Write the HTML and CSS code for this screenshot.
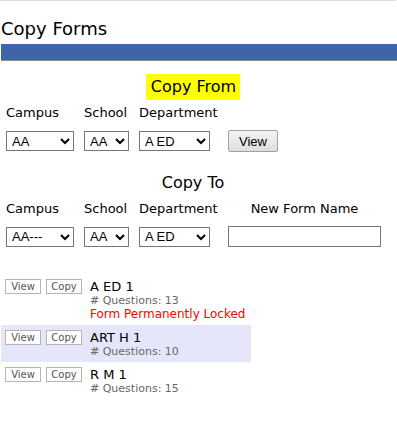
FILE: index.html
```html
<!DOCTYPE html>
<html lang="en">
<head>
    <meta charset="UTF-8">
    <meta name="viewport" content="width=device-width, initial-scale=1.0">
    <title>Copy Forms</title>
    <link rel="stylesheet" href="styles.css">
</head>
<body>
    <div class="topline"></div>
    <h1 class="title">Copy Forms</h1>
    <div class="bar"></div>

    <div class="section from">
        <h3 class="heading"><span class="mark">Copy From</span></h3>
        <div class="fields">
            <label>Campus</label>
            <label>School</label>
            <label>Department</label>
            <span></span>
            <select class="sel campus"><option>AA</option></select>
            <select class="sel school"><option>AA</option></select>
            <select class="sel dept"><option>A ED</option></select>
            <button type="button" class="btn">View</button>
        </div>
    </div>

    <div class="section to">
        <h3 class="heading"><span class="plain">Copy To</span></h3>
        <div class="fields">
            <label>Campus</label>
            <label>School</label>
            <label>Department</label>
            <label class="center">New Form Name</label>
            <select class="sel campus"><option>AA---</option></select>
            <select class="sel school"><option>AA</option></select>
            <select class="sel dept"><option>A ED</option></select>
            <input type="text" class="name">
        </div>
    </div>

    <div class="forms">
        <div class="row">
            <div class="actions"><button type="button" class="mini">View</button><button type="button" class="mini">Copy</button></div>
            <div class="info">
                <div class="fname">A ED 1</div>
                <div class="count"># Questions: 13</div>
                <div class="locked">Form Permanently Locked</div>
            </div>
        </div>
        <div class="row alt">
            <div class="actions"><button type="button" class="mini">View</button><button type="button" class="mini">Copy</button></div>
            <div class="info">
                <div class="fname">ART H 1</div>
                <div class="count"># Questions: 10</div>
            </div>
        </div>
        <div class="row">
            <div class="actions"><button type="button" class="mini">View</button><button type="button" class="mini">Copy</button></div>
            <div class="info">
                <div class="fname">R M 1</div>
                <div class="count"># Questions: 15</div>
            </div>
        </div>
    </div>
</body>
</html>
```

FILE: styles.css
```css
body { font-family: "DejaVu Sans", Verdana, sans-serif; margin: 0; color: #000; }
.topline { height: 1px; background-color: #dedede; margin-right: 1px; }
.title { font-size: 18px; font-weight: normal; line-height: 22px; margin: 17px 0 0 0; padding-left: 1px; }
.bar { height: 16px; background-color: #3e65a8; border-bottom: 1px solid #8a8a8a; margin: 4px 0 0 1px; }
.section { width: 386px; }
.heading { font-size: 16px; font-weight: normal; line-height: 20px; margin: 0; text-align: center; }
.mark { display: inline-block; background-color: #ffff00; padding: 3px 4px 3px 5px; }
.plain { display: inline-block; padding: 3px 0; }
.from { margin-top: 13px; }
.to { margin-top: 18px; }
.fields { display: grid; grid-template-columns: 78px 55px 89px 153px; row-gap: 9px; align-items: center; padding-left: 6px; margin-top: 5px; }
.fields label { font-size: 13px; line-height: 16px; }
.fields .center { text-align: center; }
.sel { font-family: "Liberation Sans", Arial, sans-serif; font-size: 13px; height: 20px; border: 1px solid #767676; border-radius: 0; background-color: #fff; padding: 0 0 0 1px; }
.campus { width: 68px; }
.school { width: 45px; }
.dept { width: 71px; }
.btn { font-family: "Liberation Sans", Arial, sans-serif; font-size: 13px; width: 50px; height: 22px; border: 1px solid #a0a0a0; border-radius: 2px; background: linear-gradient(#f4f4f4, #dedede); padding: 0; }
.name { width: 153px; height: 21px; box-sizing: border-box; border: 1px solid #767676; padding: 0 2px; }
.forms { width: 250px; margin-top: 27px; padding-left: 1px; }
.row { display: flex; padding: 5px 0 4px 4px; }
.row.alt { background-color: #e6e6fa; }
.actions { display: flex; flex-shrink: 0; gap: 5px; width: 85px; align-items: flex-start; }
.info { white-space: nowrap; }
.mini { font-family: "DejaVu Sans", Verdana, sans-serif; font-size: 10px; color: #555; width: 36px; height: 15px; padding: 0; border: 1px solid #b4b4b4; background-color: #fff; border-radius: 0; line-height: 12px; }
.fname { font-size: 13px; line-height: 16px; }
.count { font-size: 11px; line-height: 12px; color: #666; }
.locked { font-size: 12px; line-height: 14px; color: #ff0000; }
```
